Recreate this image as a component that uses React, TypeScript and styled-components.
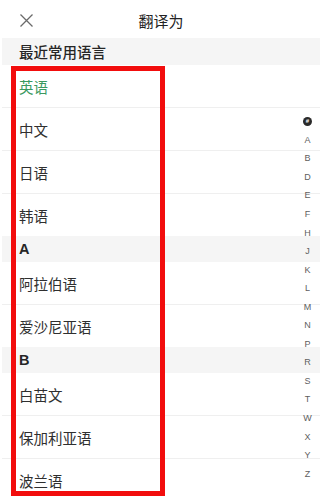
import React from "react";
import styled, { createGlobalStyle } from "styled-components";

const Global = createGlobalStyle`
  html, body { margin: 0; padding: 0; background: #fff; }
  body { font-family: "Liberation Sans", "Noto Sans CJK SC", sans-serif; -webkit-font-smoothing: antialiased; }
`;

const Page = styled.div`
  position: relative;
  width: 329px;
  height: 496px;
  overflow: hidden;
  background: #fff;
`;

const Header = styled.div`
  height: 38px;
  margin: 0 9px 0 2px;
  display: flex;
  align-items: center;
  justify-content: center;
  position: relative;
`;

const CloseBtn = styled.div`
  position: absolute;
  left: 17px;
  top: 13px;
  width: 15px;
  height: 15px;
  display: flex;
`;

const Title = styled.div`
  font-family: "Noto Sans CJK SC", sans-serif;
  font-size: 15px;
  color: #222;
  margin-top: 3px;
`;

const List = styled.div`
  margin: 0 9px 0 2px;
  display: flex;
  flex-direction: column;
`;

const SectionHeader = styled.div<{ $h: number; $weight: number }>`
  height: ${(p) => p.$h}px;
  background: #f5f5f5;
  display: flex;
  align-items: center;
  padding-left: 17px;
  font-family: "Liberation Sans", "Noto Sans CJK SC", sans-serif;
  font-weight: ${(p) => p.$weight};
  font-size: 14.5px;
  color: #262626;
`;

const Group = styled.div`
  display: flex;
  flex-direction: column;
`;

const Row = styled.div<{ $active?: boolean }>`
  height: 42px;
  display: flex;
  align-items: center;
  padding-left: 17px;
  border-bottom: 1px solid #efefef;
  font-family: "Noto Sans CJK SC", sans-serif;
  font-size: 14.5px;
  color: ${(p) => (p.$active ? "#3a9960" : "#2f2f2f")};
  &:last-child { border-bottom: none; }
`;

const IndexBar = styled.div`
  position: absolute;
  left: 299px;
  top: 112px;
  width: 17px;
  display: flex;
  flex-direction: column;
  align-items: center;
`;

const IndexItem = styled.div`
  height: 18.55px;
  display: flex;
  align-items: center;
  justify-content: center;
  font-family: "Liberation Sans", sans-serif;
  font-size: 9px;
  color: #606060;
`;

const HashBadge = styled.div`
  width: 9px;
  height: 9px;
  border-radius: 50%;
  background: #2a2a2a;
  color: #fff;
  font-size: 6px;
  font-weight: 700;
  display: flex;
  align-items: center;
  justify-content: center;
  line-height: 1;
`;

const Highlight = styled.div`
  position: absolute;
  left: 11px;
  top: 66px;
  width: 154px;
  height: 430px;
  box-sizing: border-box;
  border: 5px solid #f20d0d;
  pointer-events: none;
`;

const sections: { title: string; h: number; weight: number; items: string[] }[] = [
  { title: "最近常用语言", h: 27, weight: 500, items: ["英语", "中文", "日语", "韩语"] },
  { title: "A", h: 26, weight: 700, items: ["阿拉伯语", "爱沙尼亚语"] },
  { title: "B", h: 26, weight: 700, items: ["白苗文", "保加利亚语", "波兰语"] },
];

const letters = ["A", "B", "D", "E", "F", "H", "J", "K", "L", "M", "N", "P", "R", "S", "T", "W", "X", "Y", "Z"];

export default function App() {
  return (
    <Page>
      <Global />
      <Header>
        <CloseBtn>
          <svg width="15" height="15" viewBox="0 0 15 15">
            <path d="M1.5 1.5 L13.5 13.5 M13.5 1.5 L1.5 13.5" stroke="#6a6a6a" strokeWidth="1.3" fill="none" />
          </svg>
        </CloseBtn>
        <Title>翻译为</Title>
      </Header>
      <List>
        {sections.map((s) => (
          <React.Fragment key={s.title}>
            <SectionHeader $h={s.h} $weight={s.weight}>{s.title}</SectionHeader>
            <Group>
              {s.items.map((it) => (
                <Row key={it} $active={it === "英语"}>
                  {it}
                </Row>
              ))}
            </Group>
          </React.Fragment>
        ))}
      </List>
      <IndexBar>
        <IndexItem>
          <HashBadge>#</HashBadge>
        </IndexItem>
        {letters.map((l) => (
          <IndexItem key={l}>{l}</IndexItem>
        ))}
      </IndexBar>
      <Highlight />
    </Page>
  );
}
